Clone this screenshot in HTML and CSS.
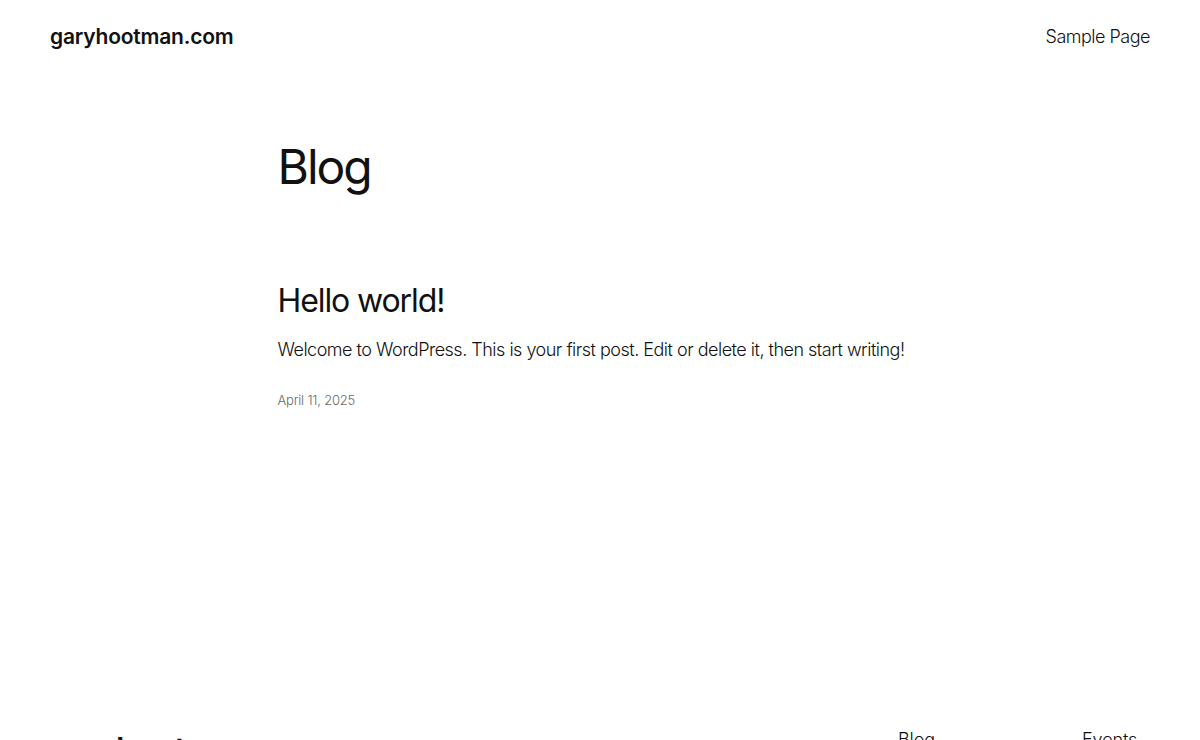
FILE: index.html
```html
<!DOCTYPE html>
<html lang="en">
<head>
<meta charset="utf-8">
<title>Blog – garyhootman.com</title>
<link rel="stylesheet" href="styles.css">
</head>
<body>
<header class="site-header">
  <a class="site-title" href="#">garyhootman.com</a>
  <nav class="site-nav"><a href="#">Sample Page</a></nav>
</header>
<main class="content">
  <h1 class="page-title">Blog</h1>
  <article class="post">
    <h2 class="post-title">Hello world!</h2>
    <p class="post-excerpt">Welcome to WordPress. This is your first post. Edit or delete it, then start writing!</p>
    <time class="post-date">April 11, 2025</time>
  </article>
</main>
<footer class="site-footer">
  <a class="footer-title" href="#">garyhootman.com</a>
  <nav class="footer-nav">
    <div class="footer-col"><a href="#">Blog</a><a href="#">About</a><a href="#">FAQs</a></div>
    <div class="footer-col"><a href="#">Events</a><a href="#">Shop</a><a href="#">Patterns</a></div>
  </nav>
</footer>
</body>
</html>
```
FILE: styles.css
```css
html, body {
  margin: 0;
  padding: 0;
  background: #fff;
}
body {
  font-family: "Inter", "Noto Sans", sans-serif;
  font-weight: 300;
  color: #111;
  letter-spacing: -0.1px;
}
a {
  color: inherit;
  text-decoration: none;
}
.site-header {
  display: flex;
  justify-content: space-between;
  align-items: center;
  padding: 22px 50px 0;
  height: 28px;
}
.site-title {
  font-size: 21px;
  font-weight: 600;
  letter-spacing: -0.2px;
}
.site-nav a {
  font-size: 18px;
  font-weight: 300;
  letter-spacing: -0.5px;
}
.content {
  width: 645px;
  margin: 0 auto;
  min-height: 662px;
  box-sizing: border-box;
  padding-top: 88px;
}
.page-title {
  margin: 0;
  font-size: 48px;
  font-weight: 400;
  line-height: 1.2;
  letter-spacing: -2px;
}
.post {
  margin-top: 86px;
}
.post-title {
  margin: 0;
  font-size: 32px;
  font-weight: 400;
  line-height: 1.2;
  letter-spacing: -1.1px;
}
.post-excerpt {
  margin: 16px 0 0;
  font-size: 18px;
  line-height: 1.5;
  letter-spacing: -0.5px;
}
.post-date {
  display: block;
  margin-top: 29px;
  font-size: 13px;
  color: #686868;
  letter-spacing: -0.2px;
}
.site-footer {
  display: flex;
  justify-content: space-between;
  padding: 17px 54px 0 46px;
}
.footer-title {
  font-size: 32px;
  font-weight: 600;
  margin-top: 1px;
}
.footer-nav {
  display: flex;
  gap: 120px;
}
.footer-col {
  display: flex;
  flex-direction: column;
  gap: 8px;
  width: 64px;
  font-size: 18px;
}
```
